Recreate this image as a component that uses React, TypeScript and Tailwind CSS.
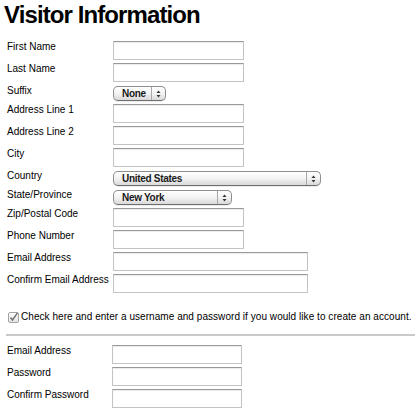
import React from "react";

type Row =
  | { label: string; kind: "input"; width: string }
  | { label: string; kind: "select"; value: string; width: string };

const visitorRows: Row[] = [
  { label: "First Name", kind: "input", width: "w-[131px]" },
  { label: "Last Name", kind: "input", width: "w-[131px]" },
  { label: "Suffix", kind: "select", value: "None", width: "w-[53px]" },
  { label: "Address Line 1", kind: "input", width: "w-[131px]" },
  { label: "Address Line 2", kind: "input", width: "w-[131px]" },
  { label: "City", kind: "input", width: "w-[131px]" },
  { label: "Country", kind: "select", value: "United States", width: "w-[208px]" },
  { label: "State/Province", kind: "select", value: "New York", width: "w-[119px]" },
  { label: "Zip/Postal Code", kind: "input", width: "w-[131px]" },
  { label: "Phone Number", kind: "input", width: "w-[131px]" },
  { label: "Email Address", kind: "input", width: "w-[195px]" },
  { label: "Confirm Email Address", kind: "input", width: "w-[195px]" },
];

const accountRows = ["Email Address", "Password", "Confirm Password"];

const TextBox: React.FC<{ width: string }> = ({ width }) => (
  <input
    type="text"
    className={`${width} h-[19px] bg-white border border-[#c4c4c4] border-t-[#999] shadow-[inset_0_1px_1px_rgba(0,0,0,0.08)] outline-none`}
  />
);

const SelectBox: React.FC<{ value: string; width: string }> = ({ value, width }) => (
  <div
    className={`${width} h-[15px] flex items-center rounded-[5px] border border-[#8e8e8e] border-b-[#6f6f6f] bg-gradient-to-b from-white via-[#f3f3f3] to-[#d9d9d9] shadow-[0_1px_0_rgba(0,0,0,0.08)]`}
  >
    <span className="flex-1 pl-[8px] text-[10px] leading-[13px] font-bold text-[#1a1a1a] tracking-[-0.3px] whitespace-nowrap">
      {value}
    </span>
    <span className="h-full border-l border-[#a8a8a8] w-[14px] flex items-center justify-center">
      <svg width="5" height="8" viewBox="0 0 5 8">
        <path d="M2.5 0.5 L4.5 3 L0.5 3 Z" fill="#333" />
        <path d="M2.5 7.5 L4.5 5 L0.5 5 Z" fill="#333" />
      </svg>
    </span>
  </div>
);

const CheckMark: React.FC = () => (
  <svg width="11" height="11" viewBox="0 0 11 11" className="shrink-0">
    <defs>
      <linearGradient id="cb" x1="0" y1="0" x2="0" y2="1">
        <stop offset="0" stopColor="#ffffff" />
        <stop offset="1" stopColor="#e2e2e2" />
      </linearGradient>
    </defs>
    <rect x="0.5" y="0.5" width="10" height="10" rx="1.5" fill="url(#cb)" stroke="#a4a4a4" />
    <path d="M2.5 5.5 L4.5 8 L9.5 0.8" fill="none" stroke="#707070" strokeWidth="1.4" />
  </svg>
);

export default function App() {
  return (
    <div className="w-[420px] h-[420px] bg-white text-black font-['Liberation_Sans',Arial,sans-serif] overflow-hidden">
      <h1 className="pl-[4px] pt-[1px] text-[24px] leading-[28px] font-bold tracking-[-0.9px] whitespace-nowrap">
        Visitor Information
      </h1>

      <div className="mt-[12px] flex flex-col">
        {visitorRows.map((row) =>
          row.kind === "input" ? (
            <div key={row.label} className="flex items-start h-[22px]">
              <label className="w-[113px] pl-[7px] text-[10px] leading-[12px] whitespace-nowrap">{row.label}</label>
              <TextBox width={row.width} />
            </div>
          ) : (
            <div key={row.label} className="flex items-start h-[19px]">
              <label className="w-[113px] pl-[7px] text-[10px] leading-[12px] whitespace-nowrap">{row.label}</label>
              <div className="pt-[1px]">
                <SelectBox value={row.value} width={row.width} />
              </div>
            </div>
          )
        )}
      </div>

      <div className="mt-[15px] flex items-center gap-[2px] pl-[8px] text-[10px] leading-[12px] tracking-[0.05px] whitespace-nowrap">
        <CheckMark />
        <span>Check here and enter a username and password if you would like to create an account.</span>
      </div>

      <hr className="mt-[11px] ml-[6px] mr-[5px] border-0 h-[2px] bg-[#c9c9c9]" />

      <div className="mt-[9px] flex flex-col">
        {accountRows.map((label) => (
          <div key={label} className="flex items-start h-[22px]">
            <label className="w-[112px] pl-[7px] text-[10px] leading-[12px] whitespace-nowrap">{label}</label>
            <TextBox width="w-[130px]" />
          </div>
        ))}
      </div>
    </div>
  );
}
